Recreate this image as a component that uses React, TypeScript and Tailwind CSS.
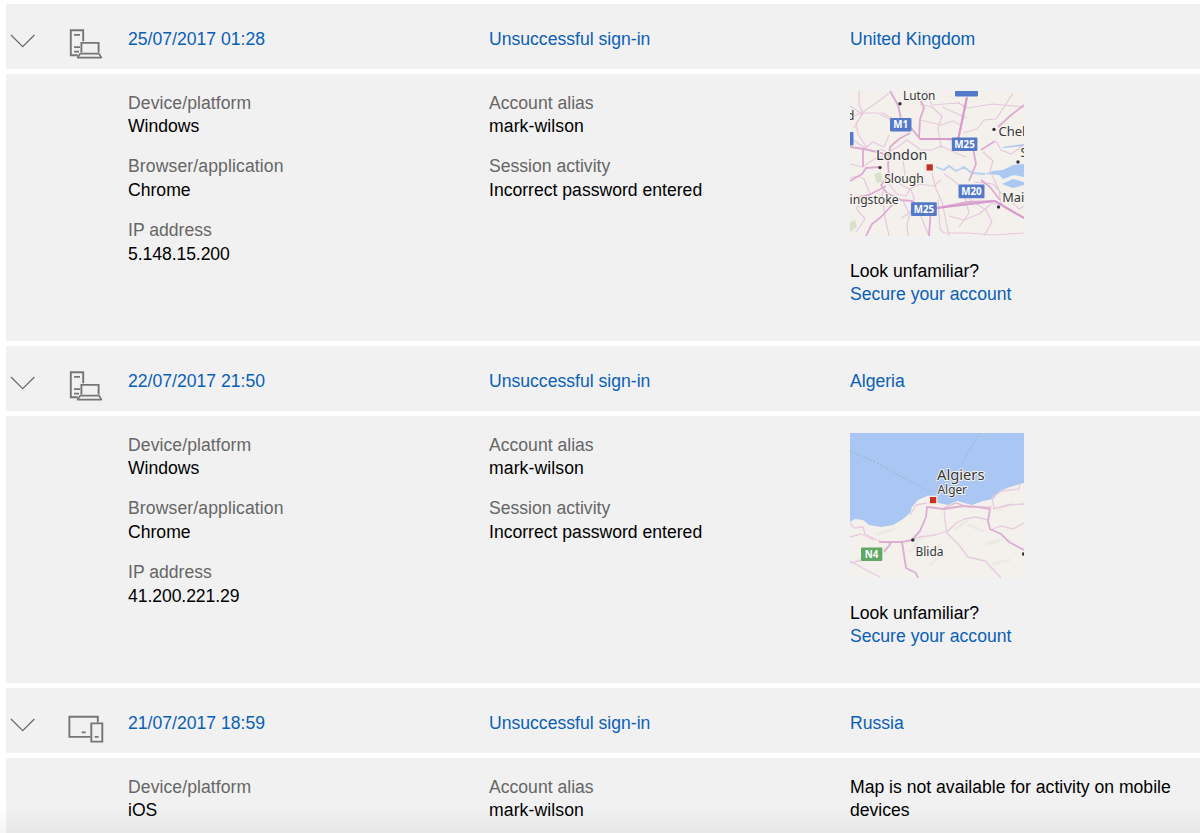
import React from "react";

type Device = "desktop" | "mobile";

interface Field {
  label: string;
  value: string;
  labelClass?: string;
  valueClass?: string;
}

interface Activity {
  time: string;
  place: string;
  device: Device;
  left: Field[];
  middle: Field[];
  map?: React.ReactNode;
}

function Chevron() {
  return (
    <svg className="h-[14px] w-[26px]" viewBox="0 0 26 14" fill="none" stroke="#6b6b6b" strokeWidth="1.3">
      <path d="M1 1L12.7 12.6L24.4 1" />
    </svg>
  );
}

function DesktopIcon() {
  return (
    <svg className="h-[31px] w-[37px]" viewBox="0 0 37 31" fill="none" stroke="#757575" strokeWidth="1.9">
      <path d="M10.8 27.2H3.8V2.3H16.2V13.3" />
      <path d="M7 6.8H13M7 19.2H13M7 23.7H12" strokeWidth="1.7" />
      <path d="M14.4 24.5V14.9H31.6V24.5" />
      <path d="M13.2 25.6H32L34.4 29.6H10.6Z" strokeWidth="1.7" strokeLinejoin="round" />
    </svg>
  );
}

function MobileIcon() {
  return (
    <svg className="h-[31px] w-[37px]" viewBox="0 0 37 31" fill="none" stroke="#757575" strokeWidth="1.9">
      <path d="M23.5 24.9H2.4V4.7H30.8V10.5" />
      <path d="M24.3 11.4H35.3V29.6H24.3Z" />
      <path d="M14.7 20.4H18.7M27.6 24.8H31.6" strokeWidth="1.8" />
    </svg>
  );
}

function Badge({ x, y, w, text, color = "#5479c9" }: { x: number; y: number; w: number; text: string; color?: string }) {
  return (
    <g>
      <rect x={x} y={y} width={w} height={13.6} rx={1} fill={color} />
      <text x={x + w / 2} y={y + 10.4} textAnchor="middle" fill="#fff" stroke="none" fontSize="9.8" fontWeight="700">
        {text}
      </text>
    </g>
  );
}

const mapClass = "block h-[145px] w-[174px] font-['Noto_Sans','Open_Sans',sans-serif]";

function LondonMap() {
  return (
    <svg className={mapClass} viewBox="0 0 174 145">
      <rect width="174" height="145" fill="#f4f1ed" />
      <path d="M24 83L31 81L33 91L27 92ZM0 131L5 129L7 136L0 141Z" fill="#d6e2c9" />
      <path d="M174 73L163 74L153 79L143 80L135 83L149 84L153 88L164 84L174 86ZM174 91L163 88L152 93L163 97L174 94ZM152 56L174 53V55L154 57Z" fill="#a9c9f0" />
      <path d="M86 76L94 79L99 75L106 80L114 76L122 82L135 83" fill="none" stroke="#b6d0ee" strokeWidth="1.8" />
      <g fill="none" stroke="#e6c8de" strokeWidth="1.2" strokeLinejoin="round">
        <path d="M0 27L11 22L28 22L41 29L48 34M9 0L9 13L13 23L6 32L8 43L17 57M39 2L29 10L13 21M31 21L48 31M0 15L12 23L4 37M70 13L82 16L92 25L88 37L91 57M76 0L82 14L108 12L119 17L142 13L174 16M163 2L154 16L146 28L134 29L127 38L113 42M92 16L117 27M108 11L115 17M70 29L91 34L103 30L112 35M0 47L15 57L23 51L34 56L39 44M29 58L38 61L49 55L57 49L71 59L82 59L91 55L106 62L116 66M0 87L8 85L14 88L20 103L6 117L15 128L6 141M14 110L29 111L34 98M39 93L47 103L56 105L60 98L69 93L84 95L91 89M53 70L55 83L50 93L61 99L64 107L61 119L57 133L58 145M69 120L76 138L79 145M82 82L86 98L92 111L99 145M88 108L90 138L94 142L118 142L142 144L174 142M94 83L103 89L112 97L115 107L119 122L109 136M99 125L114 129L129 123L141 113L153 113M124 91L143 93L153 104M133 61L143 70L140 80L149 99L151 113M146 50L151 59L161 63L174 54M160 109L169 118L174 115M119 108L136 119L142 131L134 145M33 112L35 126L39 145M53 110L59 122L52 127M0 73L12 76L26 67L36 64L51 69" />
      </g>
      <g fill="none" stroke="#dcabd2" strokeWidth="1.8" strokeLinejoin="round">
        <path d="M40 0L48 14L51 28L62 38L70 48L95 48L109 49L123 57L126 73L119 90M69 6L74 17L70 28L69 47M60 42L49 48L40 56L38 73L39 85L31 94L37 102L51 109L62 110L72 117L87 117L118 111L145 110L156 117L174 127M117 6L113 26L108 49M81 117L79 145M0 56L14 58L27 61L39 64M0 90L12 83L16 77L30 76M0 108L19 104L36 95M16 145L22 133L31 126L43 113M131 89L140 96L150 109M131 59L145 50M174 14L160 25L148 36M13 58V76" />
      </g>
      <path d="M117 6L108 49M70 48H107M87 117L145 110L174 127" fill="none" stroke="#d79acb" strokeWidth="2" />
      <g fill="#2f3336">
        <circle cx="50" cy="12.7" r="1.7" />
        <circle cx="144" cy="38.4" r="1.7" />
        <circle cx="30" cy="76.6" r="1.7" />
        <circle cx="168" cy="71" r="1.7" />
        <circle cx="148.5" cy="116" r="1.7" />
      </g>
      <rect x="105" y="-8" width="23" height="13.4" rx="1" fill="#5479c9" />
      <rect x="-14" y="41" width="17.5" height="13.5" rx="1" fill="#5479c9" />
      <rect x="75.3" y="72" width="8.8" height="8.8" fill="#f9eae5" />
      <rect x="76.6" y="73.3" width="6.2" height="6.2" fill="#bd3027" />
      <g fontSize="12.2" fill="#34373a" stroke="#f7f4ef" strokeWidth="2.2" paintOrder="stroke" strokeLinejoin="round">
        <text x="53" y="8.7" textLength="32.5" lengthAdjust="spacingAndGlyphs">Luton</text>
        <text x="148.5" y="44.5" fontSize="13">Chel</text>
        <text x="26" y="69" fontSize="14.6" textLength="51.5" lengthAdjust="spacingAndGlyphs">London</text>
        <text x="34.2" y="92" textLength="39.5" lengthAdjust="spacingAndGlyphs">Slough</text>
        <text x="-0.5" y="113" textLength="49" lengthAdjust="spacingAndGlyphs">ingstoke</text>
        <text x="152.2" y="110.5" fontSize="13" textLength="22" lengthAdjust="spacingAndGlyphs">Mai</text>
        <text x="-3" y="29" fontSize="12">d</text>
        <text x="170.5" y="66" fontSize="12">S</text>
      </g>
      <Badge x={40} y={26.9} w={21.5} text="M1" />
      <Badge x={101.8} y={46.4} w={25.6} text="M25" />
      <Badge x={108.5} y={93.6} w={26} text="M20" />
      <Badge x={61} y={111.3} w={25.8} text="M25" />
    </svg>
  );
}

function AlgiersMap() {
  return (
    <svg className={mapClass} viewBox="0 0 174 145">
      <rect width="174" height="145" fill="#f4f1ed" />
      <path d="M0 0H174V50L160 54L150 58L143 66L133 68L122 72L107 68L98 72L88 70L83 63L77 63L68 67L62 74L60 80L53 86L43 92L31 94L19 92L13 87L5 86L0 89Z" fill="#a9c7f2" />
      <path d="M0 18L25 29L47 41L80 59M130 0L120 16L111 32" fill="none" stroke="#8ba6c8" strokeWidth="0.9" strokeDasharray="1.5 2.2" />
      <g fill="none" stroke="#edeae5" strokeWidth="3" strokeLinecap="round">
        <path d="M24 119L40 113M60 119L72 103M73 121L91 112M106 96L117 88M119 92L133 98M137 111L151 107M143 131L159 127M149 77L162 70M8 127L28 122M80 132L90 123M27 101L44 96" />
      </g>
      <g fill="none" stroke="#e7cadf" strokeWidth="1.3" strokeLinejoin="round">
        <path d="M0 90L4 95L13 94L15 101L29 108L41 110M60 82L66 72L77 70M94 76L95 88L97 100L109 112L118 124L135 128L151 145M97 98L85 102L70 104L62 107M97 99L106 90L114 86L126 84L138 87M144 75L142 64L152 58L169 56L170 50M143 76L158 72L174 71M140 97L151 93L163 96L174 90M0 104L11 101L24 107M0 130L21 125L33 119M0 128L18 138L30 144" />
      </g>
      <path d="M29 109L52 109L62 107L70 98L76 84L77 74L94 76L113 73L128 74L140 76L138 88L140 96L151 101L159 109L174 117M52 109L54 122L56 135L66 140L68 145M41 110L34 119" fill="none" stroke="#dcb0d2" strokeWidth="1.9" strokeLinejoin="round" />
      <path d="M94 75L106 70L118 74L142 74" fill="none" stroke="#dfb8d4" strokeWidth="1.2" />
      <rect x="78.7" y="62.7" width="8.8" height="8.8" fill="#f8eae3" />
      <rect x="80" y="64" width="6.2" height="6.2" fill="#cb3024" />
      <circle cx="62.8" cy="107" r="1.8" fill="#303436" />
      <circle cx="173.5" cy="121" r="1.7" fill="#303436" />
      <g fontSize="12.2" fill="#34373a" stroke="#f4f3f0" strokeWidth="2" paintOrder="stroke" strokeLinejoin="round">
        <text x="87" y="46.7" fontSize="14.6" textLength="47.5" lengthAdjust="spacingAndGlyphs">Algiers</text>
        <text x="87.5" y="60.7" textLength="29.5" lengthAdjust="spacingAndGlyphs">Alger</text>
        <text x="65.5" y="123.2" textLength="28" lengthAdjust="spacingAndGlyphs">Blida</text>
      </g>
      <Badge x={11} y={114.5} w={21.3} text="N4" color="#61a765" />
    </svg>
  );
}

const fields: Field[] = [
  { label: "Device/platform", value: "Windows", labelClass: "tracking-[0.07px]" },
  { label: "Browser/application", value: "Chrome", labelClass: "tracking-[0.11px]" },
];

const middle: Field[] = [
  { label: "Account alias", value: "mark-wilson", valueClass: "tracking-[0.1px]" },
  { label: "Session activity", value: "Incorrect password entered" },
];

const activities: Activity[] = [
  {
    time: "25/07/2017 01:28",
    place: "United Kingdom",
    device: "desktop",
    left: [...fields, { label: "IP address", value: "5.148.15.200", valueClass: "tracking-[-0.08px]" }],
    middle,
    map: <LondonMap />,
  },
  {
    time: "22/07/2017 21:50",
    place: "Algeria",
    device: "desktop",
    left: [...fields, { label: "IP address", value: "41.200.221.29", valueClass: "tracking-[-0.08px]" }],
    middle,
    map: <AlgiersMap />,
  },
  {
    time: "21/07/2017 18:59",
    place: "Russia",
    device: "mobile",
    left: [{ label: "Device/platform", value: "iOS", labelClass: "tracking-[0.07px]" }],
    middle: middle.slice(0, 1),
  },
];

function FieldList({ items }: { items: Field[] }) {
  return (
    <dl className="flex flex-col gap-[17px] pt-[0.5px]">
      {items.map((item) => (
        <div key={item.label}>
          <dt className={`text-[#666666] ${item.labelClass ?? ""}`}>{item.label}</dt>
          <dd className={item.valueClass}>{item.value}</dd>
        </div>
      ))}
    </dl>
  );
}

function ActivityRow({ activity }: { activity: Activity }) {
  return (
    <section className="flex h-[342px] shrink-0 flex-col gap-[5px]">
      <header className="grid h-[65px] shrink-0 grid-cols-[122px_361px_361px_1fr] bg-[#f1f1f1] pt-[23.5px] text-[#0a60b5]">
        <div className="flex items-start">
          <button aria-label="Collapse" className="mt-[6.5px] ml-1">
            <Chevron />
          </button>
          <span className="ml-[31px]">{activity.device === "desktop" ? <DesktopIcon /> : <MobileIcon />}</span>
        </div>
        <a href="#">{activity.time}</a>
        <a href="#">Unsuccessful sign-in</a>
        <a href="#">{activity.place}</a>
      </header>
      <div className="grid h-[267px] shrink-0 grid-cols-[361px_361px_1fr] bg-[#f1f1f1] pt-[17px] pl-[122px]">
        <FieldList items={activity.left} />
        <FieldList items={activity.middle} />
        {activity.map ? (
          <div>
            {activity.map}
            <p className="mt-[23.5px]">Look unfamiliar?</p>
            <a href="#" className="text-[#0a60b5]">
              Secure your account
            </a>
          </div>
        ) : (
          <p className="pt-[0.5px] pr-5">Map is not available for activity on mobile devices</p>
        )}
      </div>
    </section>
  );
}

export default function App() {
  return (
    <main className="relative flex h-[833px] w-[1200px] flex-col overflow-hidden bg-white pt-1 pl-[6px] font-['Liberation_Sans',Arial,sans-serif] text-[17.6px] leading-[23.4px] text-black">
      {activities.map((activity) => (
        <ActivityRow key={activity.time} activity={activity} />
      ))}
      <div className="pointer-events-none absolute inset-x-0 bottom-0 h-7 bg-linear-to-b from-black/0 to-black/4" />
    </main>
  );
}
